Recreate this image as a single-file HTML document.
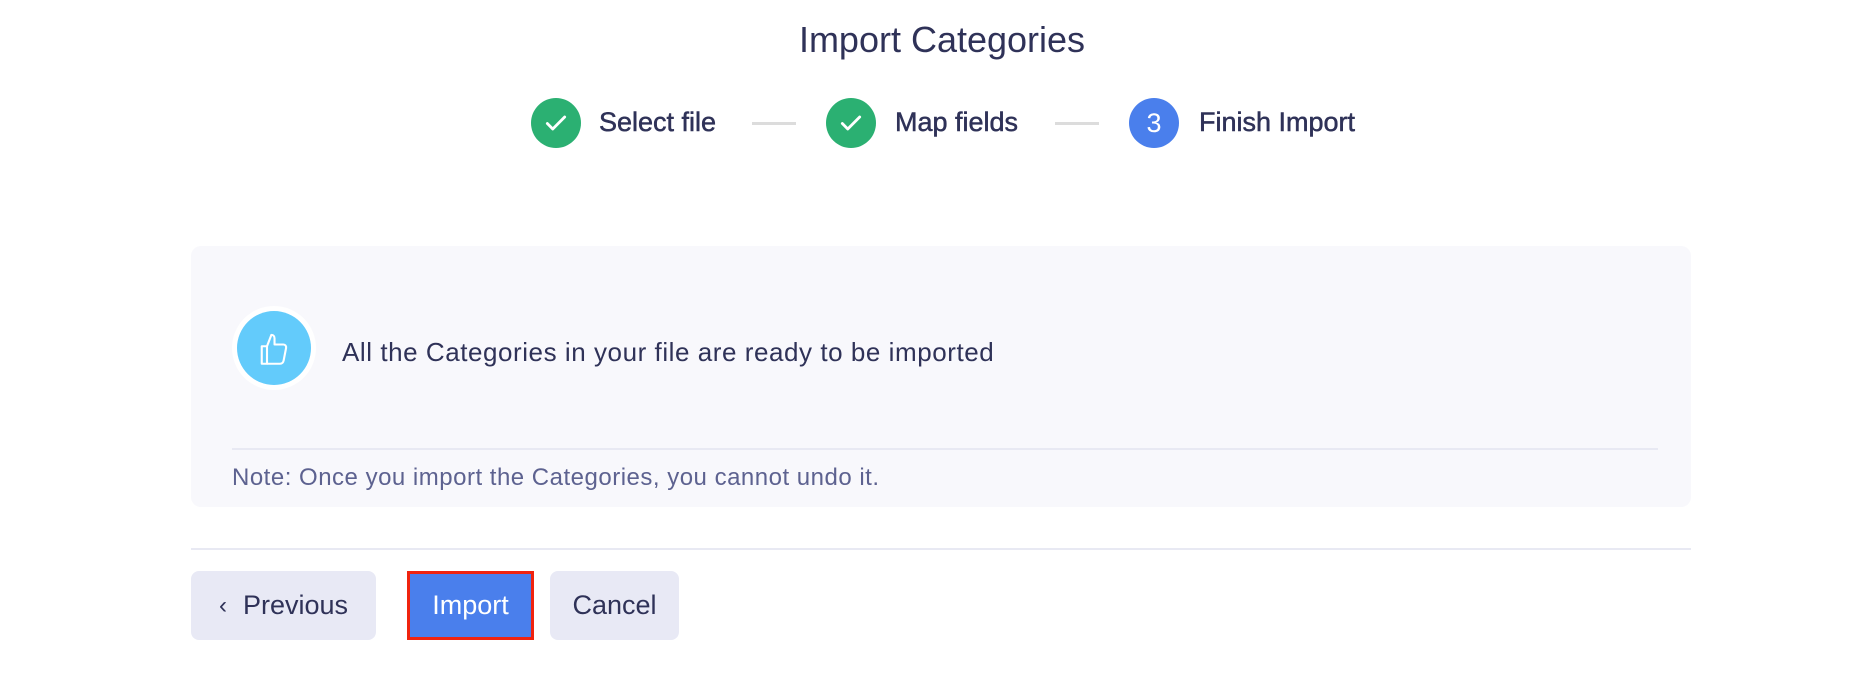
<!DOCTYPE html>
<html><head><style>
body{margin:0;width:1862px;height:676px;background:#fff;font-family:"Liberation Sans",sans-serif;color:#2f3258;position:relative;overflow:hidden}
.a{position:absolute}
.c{position:absolute;width:50px;height:50px;border-radius:50%;top:98px;display:flex;align-items:center;justify-content:center;color:#fff;font-size:27px}
.s{position:absolute;top:107px;font-size:27px;line-height:30px;color:#2f3258;-webkit-text-stroke:0.5px #2f3258}
.l{position:absolute;top:122px;height:3px;width:44px;background:#dcdcdc}
.b{position:absolute;top:571px;height:69px;border-radius:8px;background:#e8e9f5;display:flex;align-items:center;justify-content:center;font-size:27px;color:#2f3258;box-sizing:border-box}
</style></head><body>
<div class="a" style="left:0;width:1884px;top:19px;text-align:center;font-size:36px;line-height:42px">Import Categories</div>
<div class="c" style="left:531px;background:#2bb072"><svg width="26" height="26" viewBox="0 0 24 24"><path d="M4 12.5l5 5L20 6.5" fill="none" stroke="#fff" stroke-width="2.6" stroke-linecap="round" stroke-linejoin="round"/></svg></div>
<div class="s" style="left:599px">Select file</div>
<div class="l" style="left:752px"></div>
<div class="c" style="left:826px;background:#2bb072"><svg width="26" height="26" viewBox="0 0 24 24"><path d="M4 12.5l5 5L20 6.5" fill="none" stroke="#fff" stroke-width="2.6" stroke-linecap="round" stroke-linejoin="round"/></svg></div>
<div class="s" style="left:895px">Map fields</div>
<div class="l" style="left:1055px"></div>
<div class="c" style="left:1129px;background:#4a7fec">3</div>
<div class="s" style="left:1199px">Finish Import</div>

<div class="a" style="left:191px;top:246px;width:1500px;height:261px;background:#f8f8fc;border-radius:10px"></div>
<div class="a" style="left:232px;top:306px;width:84px;height:84px;border-radius:50%;background:#fff"></div>
<div class="a" style="left:237px;top:311px;width:74px;height:74px;border-radius:50%;background:#63cbfb;display:flex;align-items:center;justify-content:center">
<svg width="42" height="42" viewBox="0 0 24 24" fill="none" stroke="#fff" stroke-width="1.2" stroke-linejoin="round"><path d="M5 11h3v10H5z"/><path d="M8 11l2.5-6.5c1.3 0 1.8 1 1.8 2V10h5c1.1 0 1.8.9 1.6 2l-1.4 7.2c-.2 1-1 1.8-2 1.8H8"/></svg></div>
<div class="a" style="left:342px;top:337px;font-size:26px;line-height:30px;letter-spacing:0.55px">All the Categories in your file are ready to be imported</div>
<div class="a" style="left:232px;top:448px;width:1426px;height:2px;background:#e8e9f3"></div>
<div class="a" style="left:232px;top:464px;font-size:24px;line-height:28px;letter-spacing:0.5px;color:#5d6290">Note: Once you import the Categories, you cannot undo it.</div>
<div class="a" style="left:191px;top:548px;width:1500px;height:2px;background:#e8e9f3"></div>

<div class="b" style="left:191px;width:185px"><span style="font-size:24px;margin-right:16px">&#8249;</span>Previous</div>
<div class="b" style="left:407px;width:127px;background:#4a7fec;color:#fff;border:3px solid #f0230f;border-radius:0">Import</div>
<div class="b" style="left:550px;width:129px">Cancel</div>
</body></html>
